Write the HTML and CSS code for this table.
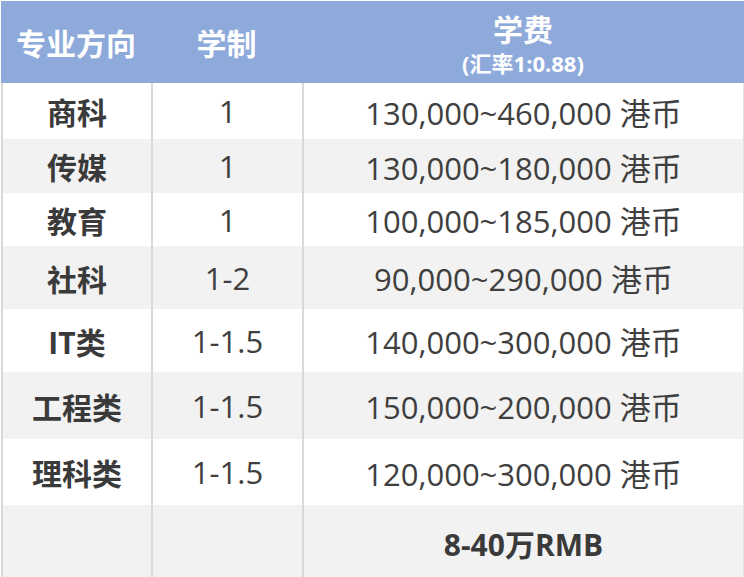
FILE: index.html
```html
<!DOCTYPE html>
<html lang="zh-CN">
<head>
<meta charset="utf-8">
<title>专业学费</title>
<link rel="stylesheet" href="styles.css">
</head>
<body>
<div class="sheet">
  <div class="row head">
    <div class="cell">专业方向</div>
    <div class="cell">学制</div>
    <div class="cell fee-head">
      <span class="fee-title">学费</span>
      <span class="fee-sub">(汇率1:0.88)</span>
    </div>
  </div>
  <div class="row white r1">
    <div class="cell label">商科</div>
    <div class="cell val">1</div>
    <div class="cell val">130,000~460,000 港币</div>
  </div>
  <div class="row gray r2">
    <div class="cell label">传媒</div>
    <div class="cell val">1</div>
    <div class="cell val">130,000~180,000 港币</div>
  </div>
  <div class="row white r3">
    <div class="cell label">教育</div>
    <div class="cell val">1</div>
    <div class="cell val">100,000~185,000 港币</div>
  </div>
  <div class="row gray r4">
    <div class="cell label">社科</div>
    <div class="cell val">1-2</div>
    <div class="cell val">90,000~290,000 港币</div>
  </div>
  <div class="row white r5">
    <div class="cell label">IT类</div>
    <div class="cell val">1-1.5</div>
    <div class="cell val">140,000~300,000 港币</div>
  </div>
  <div class="row gray r6">
    <div class="cell label">工程类</div>
    <div class="cell val">1-1.5</div>
    <div class="cell val">150,000~200,000 港币</div>
  </div>
  <div class="row white r7">
    <div class="cell label">理科类</div>
    <div class="cell val">1-1.5</div>
    <div class="cell val">120,000~300,000 港币</div>
  </div>
  <div class="row gray r8">
    <div class="cell label"></div>
    <div class="cell val"></div>
    <div class="cell label total">8-40万RMB</div>
  </div>
</div>
</body>
</html>
```
FILE: styles.css
```css
html, body {
  margin: 0;
  padding: 0;
  background: #ffffff;
}

body {
  font-family: "Open Sans", "Noto Sans CJK SC", sans-serif;
  color: #3f3f3f;
  width: 744px;
  height: 577px;
  overflow: hidden;
}

.sheet {
  padding: 1px 0 0 1px;
  display: flex;
  flex-direction: column;
}

.row {
  display: grid;
  grid-template-columns: 150px 151px 1fr;
}

.cell {
  display: flex;
  align-items: center;
  justify-content: center;
  box-sizing: border-box;
}

.head {
  height: 82px;
  background: #8eaadb;
  color: #ffffff;
  font-weight: 700;
  font-size: 30px;
}

.fee-head {
  flex-direction: column;
  padding-bottom: 2px;
}

.fee-title {
  font-size: 30px;
  line-height: normal;
}

.fee-sub {
  font-size: 22px;
  line-height: 26px;
}

.white { background: #ffffff; }
.gray { background: #f2f2f2; }

.row:not(.head) {
  border-right: 1px solid #e2e2e2;
}

.row:not(.head) .cell {
  border-left: 2px solid #d9d9d9;
}

.label {
  font-weight: 700;
  font-size: 30px;
  color: #3a3a3a;
}

.val {
  font-size: 31px;
  font-weight: 400;
}

.r1 { height: 56px; }
.r2 { height: 54px; }
.r3 { height: 53px; }
.r4 { height: 63px; }
.r5 { height: 63px; }
.r6 { height: 67px; }
.r7 { height: 66px; }
.r8 { height: 72px; }

.total {
  font-size: 30px;
  padding-top: 4px;
}
```
